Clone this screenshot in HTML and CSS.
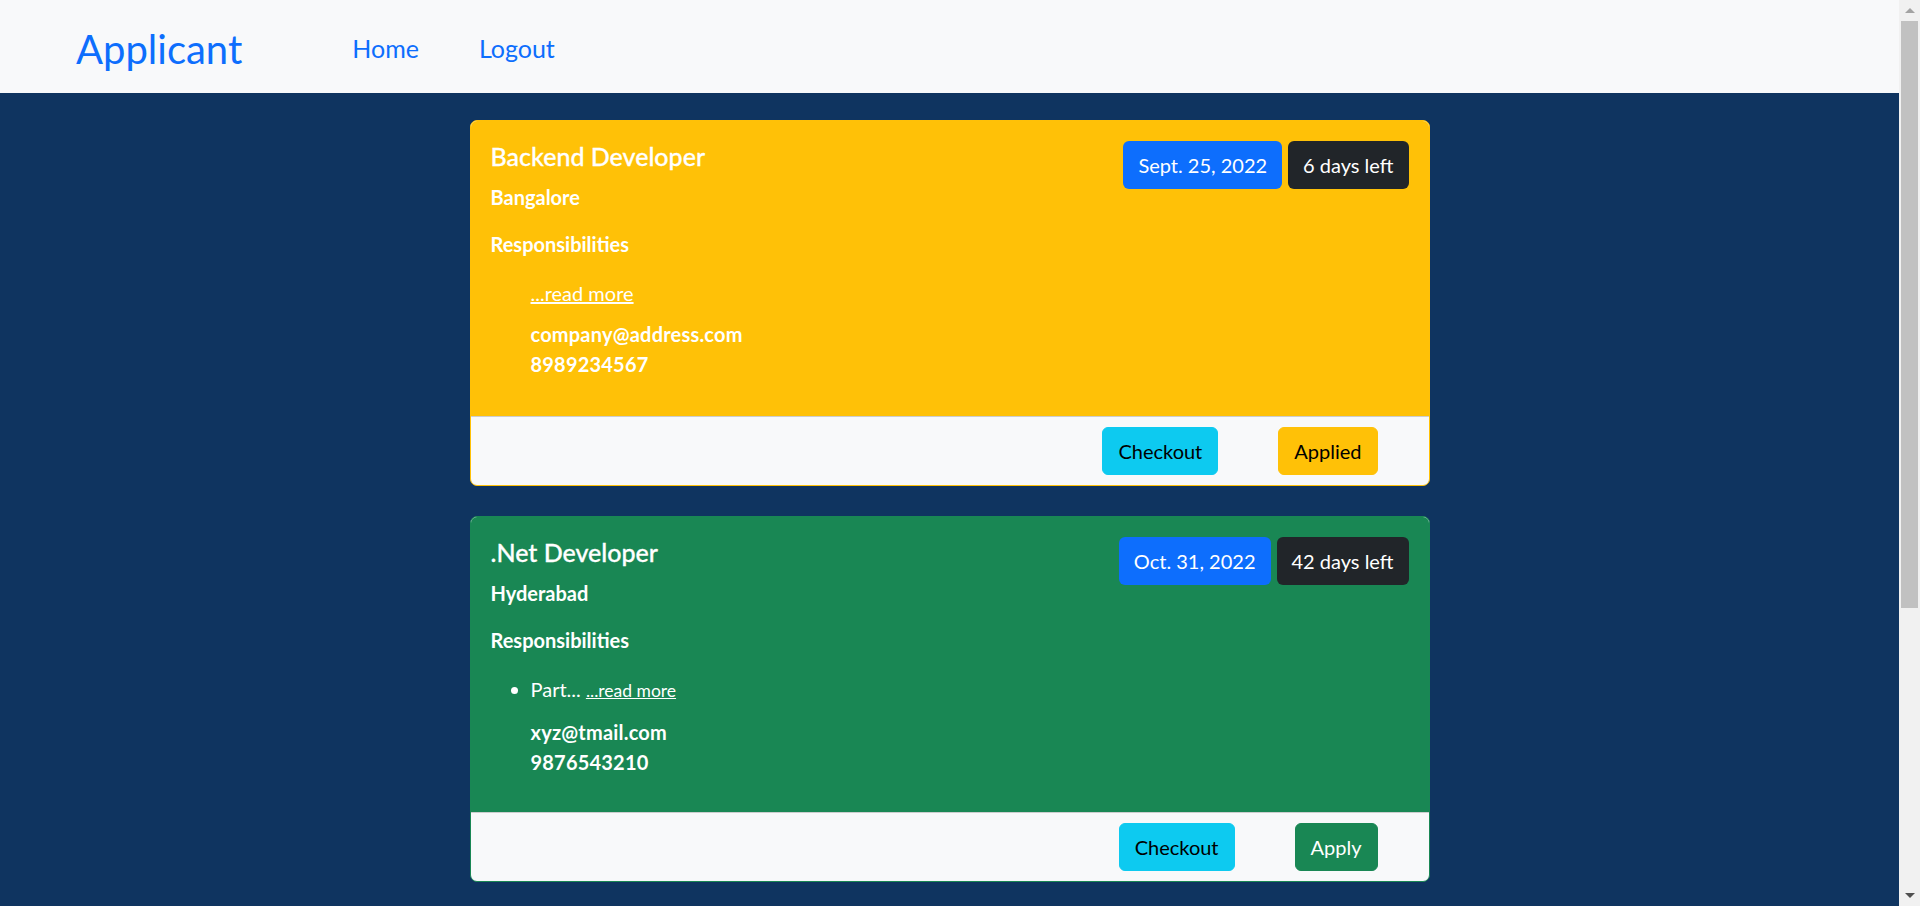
FILE: index.html
```html
<!DOCTYPE html>
<html lang="en">
<head>
<meta charset="utf-8">
<title>Applicant</title>
<link rel="stylesheet" href="styles.css">
</head>
<body>
<nav class="navbar">
  <a class="brand" href="#">Applicant</a>
  <ul class="nav">
    <li><a class="nav-link" href="#">Home</a></li>
    <li><a class="nav-link" href="#">Logout</a></li>
  </ul>
</nav>
<main class="jobs">
  <article class="job job-warning">
    <div class="job-body">
      <div class="job-head">
        <div class="job-info">
          <h5 class="job-title">Backend Developer</h5>
          <h6 class="job-loc">Bangalore</h6>
        </div>
        <div class="badges">
          <span class="badge badge-primary">Sept. 25, 2022</span>
          <span class="badge badge-dark">6 days left</span>
        </div>
      </div>
      <h6 class="job-resp">Responsibilities</h6>
      <div class="resp-list">
        <p class="resp-line"><a class="read-more" href="#">...read more</a></p>
        <p class="contact">company@address.com<br>8989234567</p>
      </div>
    </div>
    <div class="job-footer">
      <a class="btn btn-info" href="#">Checkout</a>
      <a class="btn btn-warning" href="#">Applied</a>
    </div>
  </article>

  <article class="job job-success">
    <div class="job-body">
      <div class="job-head">
        <div class="job-info">
          <h5 class="job-title">.Net Developer</h5>
          <h6 class="job-loc">Hyderabad</h6>
        </div>
        <div class="badges">
          <span class="badge badge-primary">Oct. 31, 2022</span>
          <span class="badge badge-dark">42 days left</span>
        </div>
      </div>
      <h6 class="job-resp">Responsibilities</h6>
      <div class="resp-list">
        <ul class="resp-items">
          <li>Part... <a class="read-more small" href="#">...read more</a></li>
        </ul>
        <p class="contact">xyz@tmail.com<br>9876543210</p>
      </div>
    </div>
    <div class="job-footer">
      <a class="btn btn-info" href="#">Checkout</a>
      <a class="btn btn-success" href="#">Apply</a>
    </div>
  </article>
</main>
<div class="scrollbar" aria-hidden="true">
  <span class="sb-arrow sb-up"></span>
  <span class="sb-thumb"></span>
  <span class="sb-track"></span>
  <span class="sb-arrow sb-down"></span>
</div>
</body>
</html>
```

FILE: styles.css
```css
* {
  box-sizing: border-box;
}

html, body {
  margin: 0;
  padding: 0;
}

body {
  font-family: Lato, "Noto Sans", sans-serif;
  font-size: 20px;
  line-height: 1.5;
  color: #212529;
  background: #0f3460;
  padding-right: 21px;
}

a {
  text-decoration: none;
}

.navbar {
  height: 93px;
  background: #f8f9fa;
  display: flex;
  align-items: center;
  padding: 5px 0 0 76px;
}

.brand {
  font-size: 40px;
  line-height: 48px;
  color: #0d6efd;
  margin-right: 110px;
}

.nav {
  list-style: none;
  margin: 0;
  padding: 0;
  display: flex;
  gap: 60px;
}

.nav-link {
  font-size: 25px;
  line-height: 37.5px;
  color: #0d6efd;
  display: block;
}

.jobs {
  padding: 27px 0 466px;
  display: flex;
  flex-direction: column;
  align-items: center;
  gap: 30px;
}

.job {
  width: 960px;
  border-radius: 7px;
  overflow: hidden;
  border: 1px solid;
  background: #f8f9fa;
}

.job-warning {
  border-color: #ffc107;
}

.job-warning .job-body {
  background: #ffc107;
}

.job-success {
  border-color: #198754;
}

.job-success .job-body {
  background: #198754;
}

.job-body {
  padding: 20px;
  color: #fff;
  height: 295px;
}

.job-head {
  display: flex;
  justify-content: space-between;
  align-items: flex-start;
}

.badges {
  display: flex;
  gap: 6px;
}

.job-title {
  margin: 0;
  font-size: 25px;
  line-height: 30px;
  font-weight: 500;
  -webkit-text-stroke: 0.3px #fff;
}

.job-loc {
  margin: 14px 0 0;
  font-size: 20px;
  line-height: 24px;
  font-weight: 700;
}

.badge {
  display: block;
  font-size: 20px;
  line-height: 30px;
  padding: 9px 15px;
  border-radius: 6px;
  color: #fff;
}

.badge-primary {
  background: #0d6efd;
}

.badge-dark {
  background: #212529;
}

.job-resp {
  margin: 23px 0 0;
  font-size: 20px;
  line-height: 24px;
  font-weight: 700;
}

.resp-list {
  padding-left: 40px;
}

.resp-line {
  margin: 22px 0 0;
  line-height: 30px;
}

.resp-items {
  margin: 22px 0 0;
  padding: 0;
  line-height: 30px;
}

.read-more {
  color: #fff;
  text-decoration: underline;
}

.read-more.small {
  font-size: 17.5px;
}

.contact {
  margin: 11px 0 0;
  font-weight: 700;
  line-height: 30px;
  letter-spacing: 0.2px;
}

.job-footer {
  border-top: 1px solid rgba(0, 0, 0, 0.175);
  padding: 10px 51px 10px 20px;
  display: flex;
  justify-content: flex-end;
  gap: 60px;
}

.btn {
  display: block;
  font-size: 20px;
  line-height: 30px;
  padding: 8px 15px;
  border: 1px solid transparent;
  border-radius: 6px;
}

.btn-info {
  background: #0dcaf0;
  border-color: #0dcaf0;
  color: #000;
}

.btn-warning {
  background: #ffc107;
  border-color: #ffc107;
  color: #000;
}

.btn-success {
  background: #198754;
  border-color: #198754;
  color: #fff;
}

/* window scrollbar as seen in the capture */
.scrollbar {
  position: fixed;
  top: 0;
  right: 0;
  width: 21px;
  height: 100vh;
  background: #f1f1f1;
  display: flex;
  flex-direction: column;
  align-items: center;
}

.sb-arrow {
  flex: 0 0 21px;
  width: 21px;
  display: flex;
  align-items: center;
  justify-content: center;
}

.sb-arrow::before {
  content: "";
  border-left: 5px solid transparent;
  border-right: 5px solid transparent;
}

.sb-up::before {
  border-bottom: 5px solid #a3a3a3;
}

.sb-down::before {
  border-top: 5px solid #505050;
}

.sb-thumb {
  flex: 0 0 587px;
  width: 17px;
  background: #c1c1c1;
}

.sb-track {
  flex: 1;
}
```
